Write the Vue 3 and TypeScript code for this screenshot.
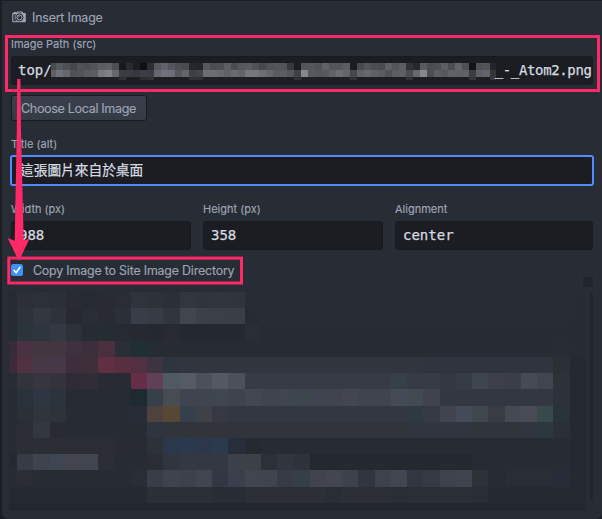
<script setup lang="ts">
import { ref } from 'vue'

const alt = ref('這張圖片來自於桌面')
const width = ref('988')
const height = ref('358')
const align = ref('center')
const copy = ref(true)

// Each entry is "color" or "color*count"
function expand(rows: string[]): string[] {
  return rows.flatMap((row) =>
    row.split(' ').flatMap((token) => {
      const [color, count] = token.split('*')
      return Array<string>(Number(count ?? 1)).fill('#' + color)
    }),
  )
}

// One half-width column followed by 35 full ones
const preview = expand([
  '272b31 2c2f35 2c3137 2b3036 282b32 262a31 282c32 2a2e34 2f333b 2d3138 2b3036 32363d 30343b 31353c 30343b 282c34*20 272b33',
  '272b32 2e333a 323740 2e333b 272931 292d35 282b33 2b3038 383d48 373b44 31353d 41454d 3e4048 3b3f47 3a3e46 272b32 282c34*19 272b33',
  '252c32 2c343b 2f353e 333842 2d3239 272b32 252d33 272a32 262932 242830 272a32 242830*4 292d35 272b33*19 262a32',
  '382b38 4a3242 433640*2 3f303d 3d2e3b 4a2f3f 2a2e36 202f34 252c32 282b32 272b33*23 282c34 272b33',
  '3e2a37 4f3142 463846*2 402d3b 3e2f3b 612f42 572f40 522f43 3c3440 2d3640 31353d*15 30343f*8 2b2f36 252931',
  '2a2c33 33333b 37353f 34323a 2f2c35 302d36 282b32 292b32 672c46 613f57 4e5962 555a65 4d505b 545863 4c505b 373b46*9 36404a 373b46*2 343844 353c46 3f454f 3d404b 3b3e48 454a54 3f464f 2d3138 252931',
  '262b32 29323a 2d3641 2b343c 262b32*4 1d2b30 373f48 484b52 3e4551 40444f 404650 40434e 434751 41444f 40454f 3e464d 3f4450 41444f 43454f 40444e*2 444a56 424951 40434d 333742*7 2d313a 252931',
  '272b32 2b3037 30353d 2e333b 272b32*4 272c38 4d423e 574735 363f4c 3e4148 363944 323741*11 2f3942 353a44 41444f 454a58 41474f 393c45 454952 484b56 38494b 29343a 252931',
  '272b32 2a2e34 33383f 282c32 272b32*5 2f3540 31353b*15 31353f*4 30343b*3 31353f 2d373e 2b2f36 252931',
  '272b32 2a2d34 2b2f35 2b2e34 2a2d33*3 282c32*2 2d3138 2b384b 2a3a4e 2c374b 2b3a4d 272d3b 252a31 272b33*19 252931',
  '252930 363b45 3f434d 3d4651 43444e 40454f 2b2e34 272b32*2 2a2d36 31353e 343843*3 3d4048 3c4148 2c3039 31363e 2e323a 242930*10 272b33*6 252931',
  '272b32 2a2d33 272b32*6 292d35 393d48 3f434d 3d414c 41454f 333744 3b3f4b 42454f 40444f 373b45 353f49 41444f 434650 3d414b 31353f 3e424c 434650 323642 363a45 3e424e 40444f 2d3138 262a31 292d35*3 272c38 252931',
  '252a31*9 2b2f36*4 282c34*2 2c3036*5 292d34 2c3036*3 292d34 2b2f36*4 292d34 252931*6',
  '23272f*36',
])

// Narrow strip covering the middle of the file path
const redacted = expand([
  '48494f 56585f 4e5057 46474d 50525a 4d4e54 53545a 5c5d62 5e5f65 4d4e54 18191d 2a2b30 1c1d22 0f1014 2c2d33 56585f 60636b 53555c 4c4e54 4a4b51 26272c 242529 56585e 4a4c52 4d4f54 5d5e64 4a4c52 55575d 5a5b60 505157 47484f 505258 53545a*2 38393e 1c1d21 55565b*2 505156 606167 54555b*2 5c5d62 1b1c21 494a4f 54555a 4c4d53 494a4f 5f6066 54555b 5d5e64 303137 26282d 595b62 4c4d53 4d4e54 5d5e64 4c4d53 62646a 505156 121317 505158 52535a 25262b',
  '606168 70727a 646670 505157 52535a 5a5b61 5c5d63 797a80 808288 66676d 3a3b45*2 36373f 3c3d46 3a3b42 64676f 6e717a 6c6f77 56575d 63646a 3f4046 42434c 6c6e76 6c6e74 67696f 606269 6a6b71 63646a 75777c*2 6e6f75 66676d 5a5b61 5c5d63 54555b 404147 85878c 58595f 54575a 58595f 606268 6c6d73 63646a 46474c 606167 67686e 606166 5b5c62 4f5055 5c5d63 5e5f65 4a4b52 66686f 85888e 4c4d53 5d5e64 56575d 606268 5e606a 606167 3b3c42 5d606a 64656b 35363b',
  '1e1f23*10 303136 1c1d21*2 2c2d32 303136 1c1d21*5 303136*2 1e1f23*13 303136 1e1f23*7 303137 1c1d21*7 303137 1c1d21*8 36373c 1c1d21*2 36373c',
])
</script>

<template>
  <main class="screen">
    <section class="panel">
      <header class="heading">
        <svg class="camera" viewBox="0 0 14 12">
          <path d="M1.5 .9h2.7v1H1.5zM5.2.5h5.2l1 1.6H13q.8 0 .8.8v7.6q0 .8-.8.8H1q-.8 0-.8-.8V2.9q0-.8.8-.8h3.2z" fill="#9da5b4" />
          <path d="M1.2 3.2h3.1L3.2 5v2.8l1.4 2.4H1.2zM6 1.5h3.5l.5.7H5.5z" fill="#3a404a" />
          <circle cx="7.5" cy="6.5" r="3.5" fill="#9da5b4" stroke="#282c34" />
          <circle cx="7.5" cy="6.5" r="2" fill="#282c34" />
          <path d="M6.4 6.5q.1-1.1 1.2-1.2" fill="none" stroke="#c0c6d0" stroke-width=".7" />
        </svg>
        <span class="heading-text">Insert Image</span>
      </header>

      <label class="label path-label">Image Path (src)</label>
      <div class="field path">
        <span>top/</span>
        <span class="redacted"><i v-for="(c, i) in redacted" :key="i" :style="{ background: c }"></i></span>
        <span class="tail">_-_Atom2.png</span>
      </div>
      <button class="choose"><span>Choose Local Image</span></button>

      <label class="label title-label">Title (alt)</label>
      <div class="field focused">{{ alt }}</div>

      <div class="sizes">
        <div><label class="label">Width (px)</label><div class="field">{{ width }}</div></div>
        <div><label class="label">Height (px)</label><div class="field">{{ height }}</div></div>
        <div><label class="label">Alignment</label><div class="field">{{ align }}</div></div>
      </div>

      <div class="copy" @click="copy = !copy">
        <span class="check">
          <svg v-if="copy" viewBox="0 0 12 12"><path d="M3 6.3 5.1 8.7 9 3.3" /></svg>
        </span>
        <span class="copy-text">Copy Image to Site Image Directory</span>
      </div>

      <div class="knob"></div>
      <div class="preview">
        <div class="mosaic"><i v-for="(c, i) in preview" :key="i" :style="{ background: c }"></i></div>
        <div class="scroll"></div>
      </div>
    </section>

    <svg class="notes" viewBox="0 0 602 519">
      <rect x="6.5" y="36.5" width="592" height="54" />
      <rect x="8.8" y="258.1" width="232.7" height="24.9" />
      <path d="M17.2 79h3.2L21 130l2.7 110.6 6-2.2L18.8 261 7.6 238l7.1 2.8L16.8 130z" />
    </svg>
  </main>
</template>

<style>
body {
  background: #1b1d23;
}
</style>

<style scoped>
* {
  box-sizing: border-box;
}
.screen {
  position: relative;
  width: 602px;
  height: 519px;
  padding: 1px 0 0 2px;
  overflow: hidden;
  background: #1b1d23;
  color: #9da5b4;
  font-family: Inter, "Noto Sans CJK TC", sans-serif;
  -webkit-text-stroke: 0.15px;
}
.panel {
  display: flex;
  flex-direction: column;
  height: 518px;
  padding: 8px 9px 0;
  background: #282c34;
  border-radius: 0 0 6px 6px;
}
.heading {
  display: flex;
  align-items: center;
  gap: 6px;
  height: 17px;
}
.camera {
  width: 14px;
  height: 12px;
  margin: -1px 0 0 1px;
}
.heading-text {
  font-size: 12.4px;
  letter-spacing: -0.18px;
  white-space: nowrap;
}
.label {
  display: block;
  height: 14px;
  font-size: 11px;
  line-height: 14px;
  white-space: nowrap;
}
.path-label {
  margin-top: 11px;
}
.field {
  display: flex;
  align-items: center;
  height: 29px;
  padding: 0 8px;
  background: #1b1d23;
  border: 1px solid #181a1f;
  border-radius: 3px;
  color: #d7dae0;
  font: 14px/27px "DejaVu Sans Mono", "Noto Sans CJK TC", monospace;
  -webkit-text-stroke: 0.25px;
  white-space: nowrap;
}
.path {
  margin-top: 5px;
  padding: 0 0 0 6px;
  overflow: hidden;
}
.redacted {
  display: grid;
  flex: none;
  grid-template-columns: 5px repeat(62, 7px) 6px;
  grid-template-rows: 7px 7px 3px;
  margin: 2px 0 0 -1px;
}
.tail {
  margin-left: -1px;
  letter-spacing: -0.36px;
}
.choose {
  display: flex;
  align-items: center;
  width: 136px;
  height: 26px;
  margin-top: 10px;
  padding: 0 0 0 9px;
  background: linear-gradient(#3a3f4b, #353b45);
  border: 1px solid #181a1f;
  border-radius: 3px;
  color: #9da5b4;
  font: 12.6px Inter, sans-serif;
  letter-spacing: -0.36px;
  white-space: nowrap;
}
.title-label {
  margin-top: 16px;
}
.focused {
  height: 31px;
  margin: 4px -1px 0;
  padding: 0 8px;
  border: 2px solid #528bff;
  font-size: 13.7px;
}
.sizes {
  display: grid;
  grid-template-columns: 180px 180px 198px;
  gap: 12px;
  margin-top: 16px;
}
.sizes .field {
  margin-top: 5px;
  padding: 0 7px;
}
.copy {
  display: flex;
  align-items: center;
  gap: 10px;
  height: 16px;
  margin-top: 12px;
}
.check {
  width: 12px;
  height: 12px;
  background: #3b93f5;
  border-radius: 2.5px;
}
.check svg {
  display: block;
  fill: none;
  stroke: #fff;
  stroke-width: 1.6;
  stroke-linecap: round;
}
.copy-text {
  font-size: 12.4px;
  letter-spacing: -0.18px;
  white-space: nowrap;
}
.knob {
  width: 10px;
  height: 10px;
  margin: -1px 0 0 572px;
  background: #21252c;
}
.preview {
  display: flex;
  margin: 5px 0 0 -2px;
}
.mosaic {
  display: grid;
  grid-template-columns: 8px repeat(35, 16.25px);
  grid-template-rows: repeat(13, 16.23px) 8px;
}
.scroll {
  width: 3px;
  height: 207px;
  margin: 1px 0 0 4px;
  background: #21252c;
}
.notes {
  position: absolute;
  inset: 0;
  width: 602px;
  height: 519px;
  pointer-events: none;
}
.notes rect {
  fill: none;
  stroke: #ff2968;
  stroke-width: 3;
}
.notes path {
  fill: #ff2968;
}
</style>
